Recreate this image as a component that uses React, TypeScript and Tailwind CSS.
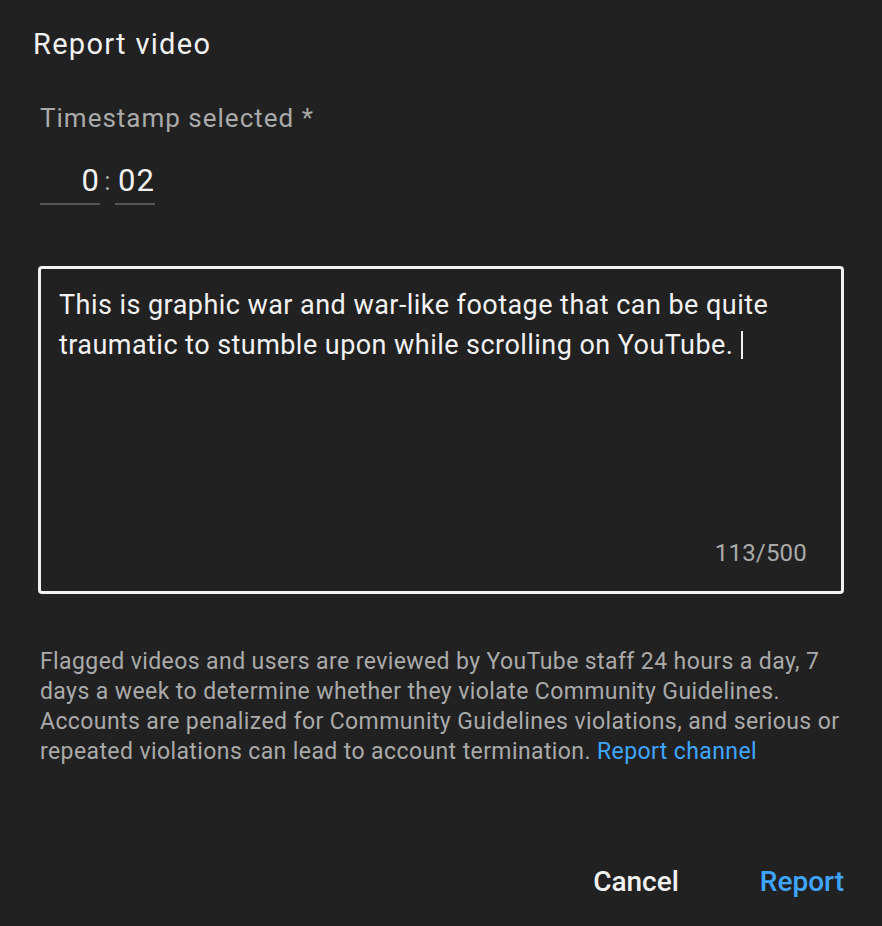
import React from 'react';

export default function App() {
  return (
    <div className="min-h-[926px] w-[882px] bg-[#212121] font-['Roboto',sans-serif] flex flex-col">
      <div className="pl-[33px] pt-[26px] text-[29px] leading-[36px] tracking-[1.3px] text-[#f1f1f1]">Report video</div>

      <div className="pl-[40px] pt-[39px]">
        <div className="text-[26px] leading-[34px] tracking-[1px] text-[#aaaaaa]">Timestamp selected *</div>
        <div className="mt-[26px] flex items-end">
          <div className="w-[60px] border-b-2 border-[#555] text-right text-[31px] leading-[40px] tracking-[1px] text-[#f1f1f1] pb-[2px]">0</div>
          <div className="w-[15px] text-center text-[26px] leading-[40px] text-[#aaaaaa] pb-[4px]">:</div>
          <div className="w-[40px] border-b-2 border-[#555] text-left pl-[3px] text-[31px] leading-[40px] tracking-[1px] text-[#f1f1f1] pb-[2px]">02</div>
        </div>
      </div>

      <div className="mx-[38px] mt-[61px] h-[328px] rounded-[4px] border-[3px] border-[#f1f1f1] flex flex-col px-[18px] pt-[16px] pb-[24px]">
        <div className="flex-1 text-[27px] leading-[40px] tracking-[0.45px] text-[#f1f1f1]">
          This is graphic war and war-like footage that can be quite traumatic to stumble upon while scrolling on YouTube.{' '}
          <span className="inline-block w-[2px] h-[28px] bg-[#f1f1f1] align-[-5px]" />
        </div>
        <div className="text-right pr-[16px] text-[24px] leading-[28px] tracking-[0.2px] text-[#aaaaaa]">113/500</div>
      </div>

      <p className="px-[40px] mt-[53px] text-[23px] leading-[30px] tracking-[0.4px] text-[#aaaaaa]">
        Flagged videos and users are reviewed by YouTube staff 24 hours a day, 7 days a week to determine whether they violate Community Guidelines. Accounts are penalized for Community Guidelines violations, and serious or repeated violations can lead to account termination.{' '}
        <a className="text-[#3ea6ff]">Report channel</a>
      </p>

      <div className="mt-auto flex justify-end gap-[81px] pr-[38px] pb-[24px]">
        <button className="text-[28px] leading-[40px] font-medium text-[#f1f1f1]">Cancel</button>
        <button className="text-[28px] leading-[40px] font-medium text-[#3ea6ff]">Report</button>
      </div>
    </div>
  );
}
